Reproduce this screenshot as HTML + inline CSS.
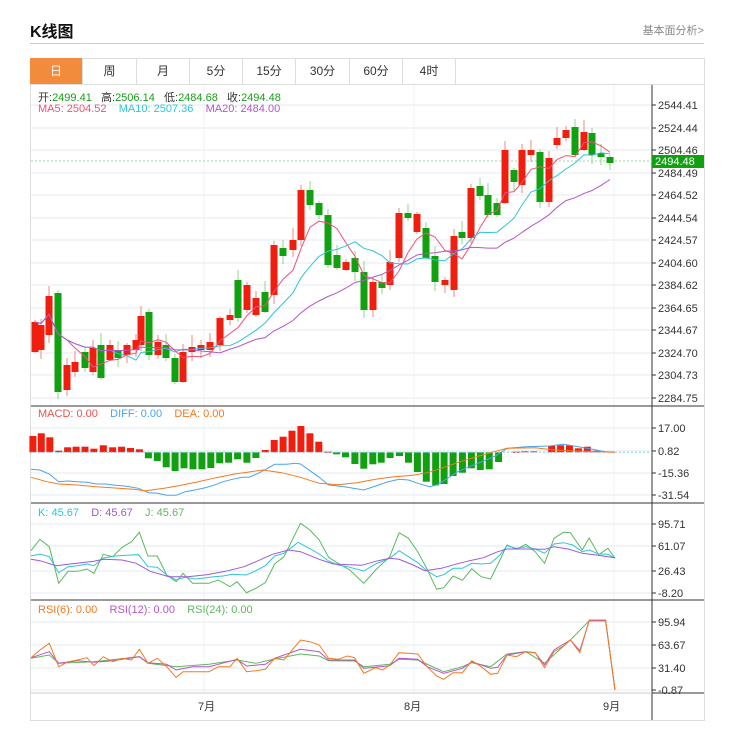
<!DOCTYPE html>
<html><head><meta charset="utf-8"><style>
body{margin:0;background:#fff;font-family:"Liberation Sans","Noto Sans CJK SC",sans-serif;}
#w{position:relative;width:738px;height:750px;overflow:hidden}
.t{position:absolute;left:30px;top:18px;font-size:16px;font-weight:bold;color:#111}
.r{position:absolute;right:34px;top:22px;font-size:11px;color:#888}
.sep{position:absolute;left:30px;top:43px;width:674px;height:1px;background:#ccc}
.box{position:absolute;left:30px;top:58px;width:673px;height:661px;border:1px solid #ddd}
.tabs{position:absolute;left:30px;top:58px;height:26px;border-bottom:1px solid #ddd;width:674px}
.tab{position:absolute;top:0;height:26px;line-height:26px;text-align:center;font-size:12px;color:#333;border-right:1px solid #ddd;box-sizing:border-box}
.lg{position:absolute;font-size:11px;white-space:nowrap}
svg{position:absolute;left:0;top:0}
</style></head><body><div id="w">
<div class="t">K线图</div><div class="r">基本面分析&gt;</div><div class="sep"></div>
<div class="box"></div>
<div class="tabs">
<div class="tab" style="left:0;width:53px;background:#f28b3c;color:#fff">日</div>
<div class="tab" style="left:53px;width:54px">周</div>
<div class="tab" style="left:107px;width:53px">月</div>
<div class="tab" style="left:160px;width:53px">5分</div>
<div class="tab" style="left:213px;width:53px">15分</div>
<div class="tab" style="left:266px;width:54px">30分</div>
<div class="tab" style="left:320px;width:53px">60分</div>
<div class="tab" style="left:373px;width:53px">4时</div>
</div>
<svg id="s" width="738" height="750"></svg>
<div class="lg" style="left:38px;top:89px;color:#333">开:<span style="color:#1a9c1a">2499.41</span>&nbsp;&nbsp; 高:<span style="color:#1a9c1a">2506.14</span>&nbsp;&nbsp; 低:<span style="color:#1a9c1a">2484.68</span>&nbsp;&nbsp; 收:<span style="color:#1a9c1a">2494.48</span></div>
<div class="lg" style="left:38px;top:103px"><span style="color:#e8537a">MA5: 2504.52</span>&nbsp;&nbsp;&nbsp; <span style="color:#2fc5d6">MA10: 2507.36</span>&nbsp;&nbsp;&nbsp; <span style="color:#b455c8">MA20: 2484.00</span></div>
<div class="lg" style="left:38px;top:408px"><span style="color:#f0524a">MACD: 0.00</span>&nbsp;&nbsp;&nbsp; <span style="color:#4aa3f0">DIFF: 0.00</span>&nbsp;&nbsp;&nbsp; <span style="color:#f47a20">DEA: 0.00</span></div>
<div class="lg" style="left:38px;top:507px"><span style="color:#2fc5d6">K: 45.67</span>&nbsp;&nbsp;&nbsp; <span style="color:#9a5ad6">D: 45.67</span>&nbsp;&nbsp;&nbsp; <span style="color:#5cb85c">J: 45.67</span></div>
<div class="lg" style="left:38px;top:604px"><span style="color:#f47a20">RSI(6): 0.00</span>&nbsp;&nbsp;&nbsp; <span style="color:#b455c8">RSI(12): 0.00</span>&nbsp;&nbsp;&nbsp; <span style="color:#5cb85c">RSI(24): 0.00</span></div>
</div>
<script>
var S=document.getElementById('s'),h='';
var ZX=2.13;
function L(x1,y1,x2,y2,c,w,d){h+='<line x1="'+x1+'" y1="'+y1+'" x2="'+x2+'" y2="'+y2+'" stroke="'+c+'" stroke-width="'+(w||1)+'"'+(d?' stroke-dasharray="'+d+'"':'')+'/>';}
function T(x,y,s,c){h+='<text x="'+x+'" y="'+y+'" font-size="11" fill="'+(c||'#333')+'" font-family="Liberation Sans,Noto Sans CJK SC,sans-serif">'+s+'</text>';}
function P(pts,c){h+='<polyline fill="none" stroke="'+c+'" stroke-width="1" points="'+pts.join(' ')+'"/>';}
function Z(a,c){var p=[];for(var i=0;i<a.length;i+=2)p.push((a[i]/ZX).toFixed(1)+','+(a[i+1]/3+400).toFixed(1));P(p,c);}
var ml=[[2544.41,105],[2524.44,128],[2504.46,150],[2484.49,173],[2464.52,195],[2444.54,218],[2424.57,240],[2404.60,263],[2384.62,285],[2364.65,308],[2344.67,330],[2324.70,353],[2304.73,375],[2284.75,398]];
[204,414,614].forEach(function(x){L(x,85,x,693,'#eef2f5');});
function ax(list){list.forEach(function(a){L(31,a[1],652,a[1],'#e3ebf2');L(652,a[1],656,a[1],'#333');T(658,a[1]+4,a[0].toFixed?a[0].toFixed(2):a[0]);});}
ax(ml);
ax([['17.00',428],['0.82',451],['-15.36',473],['-31.54',495]]);
ax([['95.71',524],['61.07',546],['26.43',571],['-8.20',593]]);
ax([['95.94',622],['63.67',645],['31.40',668],['-0.87',690]]);
L(652,85,652,720,'#333');L(31,406,704,406,'#333');L(31,503,704,503,'#333');L(31,600,704,600,'#333');L(31,693,704,693,'#ccc');L(652,693,704,693,'#333');
T(198,710,'7月');T(404,710,'8月');T(603,710,'9月');
var c=[[35,352,322],[41,350,325],[49,335,296],[58,293,392],[67,390,365],[75,372,362],[85,352,368],[93,372,348],[101,345,378],[110,360,345],[118,350,358],[127,355,345],[136,350,340],[141,345,316],[149,312,355],[158,355,342],[166,345,358],[175,358,382],[183,382,352],[192,352,347],[201,350,345],[210,350,342],[220,345,318],[230,320,315],[238,280,318],[247,310,285],[256,315,298],[265,292,312],[274,295,245],[283,248,256],[293,250,240],[301,240,190],[310,190,205],[319,203,215],[328,215,265],[337,255,268],[346,270,262],[355,258,272],[364,272,310],[373,310,282],[382,282,288],[390,285,262],[399,258,213],[408,213,218],[417,232,214],[426,228,258],[435,256,282],[445,285,280],[454,290,236],[462,232,238],[471,238,188],[480,186,196],[488,195,215],[497,203,215],[505,203,150],[514,170,182],[522,185,150],[531,155,150],[540,152,202],[549,202,158],[557,145,138],[566,138,130],[575,127,155],[584,150,132],[592,133,155],[601,153,157],[610,157,163]];
function yp(y){return 2544.41-(y-105)/1.1283;}
var cl=c.map(function(k){return yp(k[2]);});
h+='<line x1="31" y1="161" x2="652" y2="161" stroke="#9ed89e" stroke-dasharray="2,2"/>';
c.forEach(function(k,i){var up=k[2]<k[1],col=up?'#f01e0e':'#10a010',wc=up?'#f08a84':'#8fd48f';var t=Math.min(k[1],k[2]),b=Math.max(k[1],k[2]);var v=((i*37)%11)+2;L(k[0],t-v,k[0],b+((i*53)%9)+1,wc);h+='<rect x="'+(k[0]-3.5)+'" y="'+t+'" width="7" height="'+Math.max(b-t,2)+'" fill="'+col+'"/>';});
function ma(n){return cl.map(function(v,i){var s=0,m=0;for(var j=Math.max(0,i-n+1);j<=i;j++){s+=cl[j];m++;}return s/m;});}
function yy(p){return 105+(2544.41-p)*1.1283;}
[[5,'#f0507a'],[10,'#2fc5d6'],[20,'#b455c8']].forEach(function(a){var m=ma(a[0]);P(m.map(function(v,i){return c[i][0]+','+yy(v).toFixed(1);}),a[1]);});
var bars=[[70,108],[88,100],[106,112],[125,152],[144,142],[162,140],[181,140],[200,146],[220,136],[240,142],[259,140],[278,144],[297,148],[316,175],[335,183],[354,202],[373,213],[392,205],[411,208],[430,208],[449,204],[468,190],[487,188],[506,178],[526,188],[545,174],[565,150],[584,120],[603,110],[622,92],[641,78],[660,100],[679,125],[698,155],[717,163],[736,172],[756,192],[775,206],[794,193],[812,188],[831,174],[851,168],[870,188],[889,216],[908,245],[928,256],[946,252],[965,228],[985,218],[1004,205],[1023,210],[1042,208],[1062,186],[1100,155],[1118,154],[1137,154],[1175,138],[1194,136],[1213,136],[1232,145],[1251,140],[1270,152]];
bars.forEach(function(b){var x=b[0]/ZX,y=b[1]/3+400,z=452.3;h+='<rect x="'+(x-3.5).toFixed(1)+'" y="'+Math.min(y,z).toFixed(1)+'" width="7" height="'+Math.max(Math.abs(y-z),1).toFixed(1)+'" fill="'+(y<z?'#f01e0e':'#10a010')+'"/>';});
L(31,452.3,652,452.3,'#8ccff0',1,'2,2');
Z([66,208,85,210,105,222,125,245,145,243,165,245,185,247,205,252,225,252,245,256,265,258,295,265,316,278,335,280,355,286,375,286,395,275,415,270,435,264,455,256,475,245,495,238,515,232,530,232,550,220,570,205,585,193,610,193,630,190,640,192,660,212,680,232,700,255,720,258,740,262,775,270,800,258,825,246,850,238,870,240,890,250,915,260,930,255,950,238,975,215,1000,200,1030,183,1055,168,1080,145,1120,140,1170,138,1200,133,1250,145,1270,150,1290,155,1310,157],'#4aa3f0');
Z([66,232,100,245,125,252,165,255,205,260,245,264,285,268,310,272,350,265,380,257,420,246,460,233,500,222,560,210,600,218,640,232,680,250,720,254,760,248,800,238,840,230,880,226,910,218,940,205,980,185,1020,168,1060,152,1080,145,1140,143,1180,150,1230,153,1310,157],'#f47a20');
Z([66,452,85,418,105,440,125,550,145,514,165,514,185,507,200,520,220,463,240,470,260,442,280,425,297,397,315,468,335,468,355,525,375,545,390,520,410,550,445,550,465,540,490,560,505,545,525,578,545,565,565,548,585,492,605,470,640,370,660,390,680,420,700,472,720,490,745,510,775,550,800,510,830,470,850,398,870,415,890,456,910,508,930,568,945,563,965,528,985,541,1005,506,1025,530,1045,537,1065,480,1080,435,1100,448,1120,433,1140,455,1160,490,1180,415,1200,397,1215,398,1240,450,1255,414,1275,464,1295,445,1310,475],'#5cb85c');
Z([66,468,85,462,105,470,125,518,145,500,165,497,185,492,200,497,220,474,245,468,270,466,295,464,315,500,335,502,355,525,375,540,395,532,415,537,435,534,455,530,475,528,495,523,525,525,545,512,565,497,585,468,605,460,635,427,660,446,680,462,700,483,720,495,740,500,775,513,800,492,830,475,850,452,870,470,890,488,910,513,930,530,945,524,965,505,985,505,1005,490,1025,492,1045,490,1065,465,1080,437,1100,445,1120,440,1140,447,1160,460,1180,432,1200,428,1220,435,1240,455,1255,450,1275,462,1295,463,1310,475],'#2fc5d6');
Z([66,478,85,482,120,497,150,492,200,484,220,478,260,480,290,490,320,514,360,530,400,530,440,524,480,514,520,500,550,482,580,463,615,450,640,455,680,478,710,492,770,496,800,484,830,475,850,478,880,495,905,512,940,505,970,493,1000,482,1030,473,1060,455,1080,447,1120,447,1160,448,1180,440,1210,447,1240,460,1270,465,1310,473],'#9a5ad6');
Z([66,775,105,765,125,790,200,785,297,770,315,790,375,800,445,793,505,780,545,790,585,777,640,762,680,768,700,782,755,783,775,800,830,793,850,778,890,780,945,815,985,800,1005,788,1045,800,1080,762,1120,755,1160,790,1215,720,1255,662,1290,662,1310,870],'#5cb85c');
Z([66,773,105,755,125,790,165,782,200,787,240,782,297,770,315,788,355,793,375,810,410,800,445,800,465,793,505,778,525,798,565,793,585,775,640,748,680,755,700,780,755,780,775,805,830,797,850,775,890,778,910,800,945,820,985,805,1005,785,1045,805,1060,802,1080,765,1120,755,1140,758,1160,795,1180,750,1215,720,1235,752,1255,662,1290,662,1310,870],'#b455c8');
Z([66,773,85,750,105,730,125,800,145,785,165,780,185,773,200,797,220,770,240,785,260,775,280,780,297,748,315,790,335,775,355,800,375,832,390,815,410,815,445,815,465,800,490,800,505,775,525,815,545,812,565,808,585,775,605,780,640,720,660,725,680,735,700,775,720,778,740,768,755,773,775,820,800,803,815,810,830,795,850,758,870,760,890,762,910,800,930,828,945,838,965,818,985,818,1005,782,1025,800,1045,823,1060,820,1080,765,1100,770,1120,755,1140,758,1160,803,1180,755,1200,738,1215,720,1235,758,1255,660,1290,660,1310,870],'#f47a20');
h+='<rect x="652" y="155" width="52" height="13" fill="#10a010"/>';T(655,165,'2494.48','#fff');
S.innerHTML=h;
</script>
</body></html>
